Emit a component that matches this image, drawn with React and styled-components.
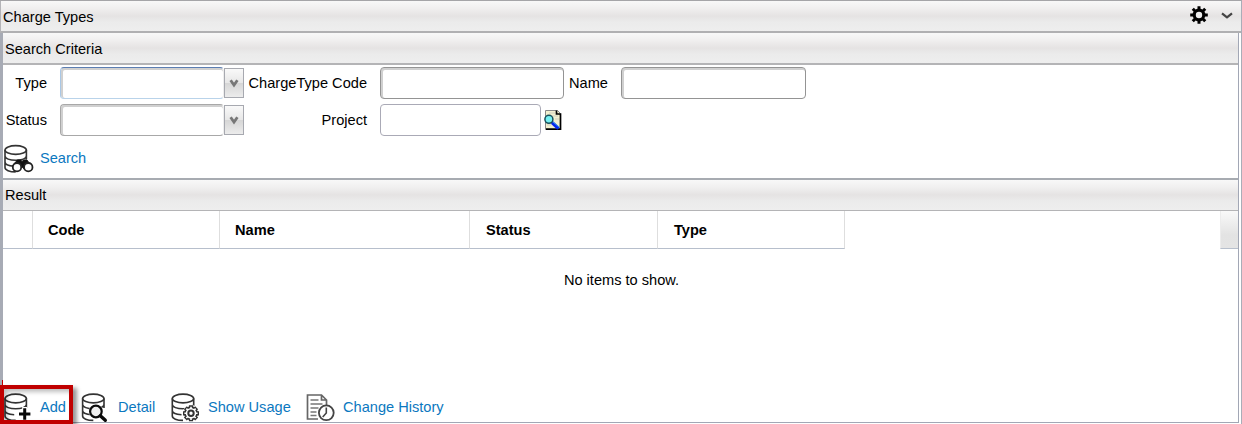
import React from "react";
import styled, { createGlobalStyle } from "styled-components";

const Global = createGlobalStyle`
  * { box-sizing: border-box; }
  body { margin: 0; background: #fff; overflow: hidden; }
`;

const Page = styled.div`
  width: 1242px;
  height: 424px;
  display: flex;
  flex-direction: column;
  font-family: "Liberation Sans", Arial, sans-serif;
  font-size: 14.6px;
  color: #000;
  border-top: 1px solid #a5a5a8;
  border-right: 1px solid #a9adb8;
`;

const Bar = styled.div`
  display: flex;
  align-items: center;
  flex: none;
  background: linear-gradient(#f8f8f8 0%, #f0efef 25%, #e5e3e3 50%, #ebebeb 70%, #eeeeee 100%);
`;

const TitleBar = styled(Bar)`
  height: 32px;
  padding: 1px 8px 0 2px;
  border-left: 1px solid #b4b4b8;
  border-bottom: 2px solid #b0b0b2;
`;

const Tools = styled.div`
  display: flex;
  align-items: center;
  gap: 13px;
  margin-left: auto;
  margin-top: -3px;
  svg { display: block; }
`;

const Body = styled.div`
  flex: none;
  width: 1239px;
  height: 390px;
  display: flex;
  flex-direction: column;
  border-left: 3px solid #a7abb5;
  border-right: 1px solid #a2a7b5;
  border-bottom: 1px solid #a2a7b5;
`;

const SectionBar = styled(Bar)`
  height: ${(p) => p.$h}px;
  padding: ${(p) => p.$top || 0}px 0 0 2px;
  border-bottom: ${(p) => p.$line}px solid #b4b4b6;
`;

const Form = styled.div`
  height: 113px;
  flex: none;
  display: flex;
  flex-direction: column;
  padding-top: 2px;
`;

const FormRow = styled.div`
  display: flex;
  align-items: center;
  height: ${(p) => p.$h}px;
`;

const Label = styled.label`
  width: ${(p) => p.$w}px;
  display: flex;
  justify-content: flex-end;
  white-space: nowrap;
  margin-right: 13px;
  line-height: 18px;
`;

const Field = styled.input`
  display: block;
  width: ${(p) => p.$w}px;
  height: 32px;
  padding: 0 6px;
  font: inherit;
  background: #fff;
  outline: none;
  border: 1px solid ${(p) => (p.$flat ? "#aaaab6" : p.$combo ? "#a8a8a8" : "#949494")};
  border-radius: 4px;
  box-shadow: ${(p) => (p.$flat ? "none" : "inset 1px 1px 0 1px #d0d0d0")};
  border-color: ${(p) => p.$focus && "#5b7db1 #b9d3ea #b9d3ea #a9c7e5"};
  ${(p) => p.$combo && "border-right-color: #eee;"}
`;

const DropButton = styled.button`
  width: 20px;
  height: 30px;
  padding: 0;
  display: flex;
  align-items: center;
  justify-content: center;
  border: 1px solid #a7a9b0;
  background: linear-gradient(#f9f9f9, #e7e7e7 50%, #d6d6d6 51%, #ececec);
`;

const Lookup = styled.span`
  display: flex;
  margin-left: 3px;
`;

const Action = styled.a`
  display: flex;
  align-items: center;
  color: #0b78c0;
  white-space: nowrap;
  width: ${(p) => p.$w}px;
  gap: ${(p) => p.$gap || 7}px;
  svg { display: block; flex: none; }
`;

const SearchLine = styled.div`
  height: 38px;
  padding: 3px 0 0 0;
`;

const ResultPanel = styled.div`
  flex: 1;
  border-top: 2px solid #a7abb1;
  display: flex;
  flex-direction: column;
`;

const Grid = styled.div`
  display: flex;
  height: 38px;
  flex: none;
`;

const HeadCell = styled.div`
  width: ${(p) => p.$w}px;
  border-right: 1px solid #dedede;
  border-bottom: 1px solid #b7bfcc;
  padding-left: ${(p) => p.$pad || 15}px;
  font-weight: bold;
  line-height: 39px;
`;

const Corner = styled.div`
  width: 18px;
  margin-left: auto;
  border-bottom: 1px solid #b7bfcc;
  border-left: 1px solid #ececec;
  background: linear-gradient(#f9f9f9, #e3e3e3 65%, #e4e4e4);
`;

const Empty = styled.div`
  flex: 1;
  text-align: center;
  padding: 22px 0 0 2px;
  line-height: 18px;
`;

const Footer = styled.div`
  height: 31px;
  display: flex;
  align-items: center;
  flex: none;
`;

const Highlight = styled.div`
  position: absolute;
  left: 0;
  top: 385px;
  width: 73px;
  height: 39px;
  border: 4px solid #c00000;
  box-shadow: 4px 3px 4px rgba(0, 0, 0, 0.4), inset 3px 3px 4px rgba(0, 0, 0, 0.25);
  pointer-events: none;

  &::before {
    content: "";
    position: absolute;
    left: -2px;
    top: -9px;
    width: 1px;
    height: 5px;
    background: #c00000;
  }
`;

const Database = () => (
  <g fill="none" stroke="#333" strokeWidth="1.6" transform="translate(.7 0)">
    <ellipse cx="12" cy="5.5" rx="10.7" ry="4.4" fill="#fff" />
    <path d="M1.3 5.5V23c0 2.5 4.5 4.4 10.7 4.4M22.7 5.5V15M1.3 11.5c0 2.6 4.8 4.3 10.7 4.3s10.7-1.7 10.7-4.3M1.3 17.6c0 2.3 3.6 3.9 9.2 4.2" />
  </g>
);

const Glyph = ({ children }) => (
  <svg width="30" height="29" viewBox="0 0 30 29" overflow="visible">{children}</svg>
);

const SearchIcon = () => (
  <Glyph>
    <g transform="translate(0 .5)">
      <Database />
      <path d="M9.3 22l5-6.5h3.4l1.3 1.6 1.5-1.6h3.4l5 6.5-4.5 2h-4l-1-1.2h-1l-1 1.2h-6z" fill="#111" stroke="#111" />
      <circle cx="14" cy="22.7" r="4.2" fill="#fff" stroke="#222" strokeWidth="1.8" />
      <circle cx="25.3" cy="22.7" r="4.2" fill="#fff" stroke="#222" strokeWidth="1.8" />
    </g>
  </Glyph>
);

const AddIcon = () => (
  <Glyph>
    <g transform="translate(0 1)">
      <Database />
      <path d="M21.7 14v14.5M15 21h13.5" stroke="#fff" strokeWidth="5" />
      <path d="M21.7 15.3v11.4M16 21h11.4" stroke="#080808" strokeWidth="3" />
    </g>
  </Glyph>
);

const DetailIcon = () => (
  <Glyph>
    <g transform="translate(.6 1)">
      <Database />
      <circle cx="15.3" cy="18.5" r="7" fill="#fff" />
      <circle cx="15.3" cy="18.5" r="5.8" fill="#eee" stroke="#0a0a0a" strokeWidth="2.2" />
      <path d="M19.7 22.7l5 4.6" stroke="#0a0a0a" strokeWidth="3.4" strokeLinecap="round" />
    </g>
  </Glyph>
);

const teeth = (n, cx, cy, r) =>
  Array.from({ length: n }, (_, i) => {
    const a = (i * 2 * Math.PI) / n;
    return `M${cx} ${cy}L${cx + r * Math.cos(a)} ${cy + r * Math.sin(a)}`;
  }).join("");

const UsageIcon = () => (
  <Glyph>
    <g transform="translate(.3 1)">
      <Database />
      <circle cx="20.7" cy="20.3" r="8.4" fill="#fff" />
      <path d={teeth(8, 20.7, 20.3, 8)} stroke="#333" strokeWidth="4.2" />
      <circle cx="20.7" cy="20.3" r="6.1" fill="#fff" stroke="#333" strokeWidth="1.7" />
      <path d={teeth(8, 20.7, 20.3, 6.6)} stroke="#fff" strokeWidth="1.6" />
      <circle cx="20.7" cy="20.3" r="2.7" fill="#fff" stroke="#333" strokeWidth="2" />
    </g>
  </Glyph>
);

const HistoryIcon = () => (
  <Glyph>
    <g transform="translate(0 .5)">
      <path d="M12 26.5H1.5v-24h14l5 5V13M15.5 2.5v5h5" fill="none" stroke="#666" strokeWidth="1.7" />
      <path d="M4.5 7.5h8M4.5 11.5h12M4.5 15.5h8M4.5 19.5h6M4.5 23h6" stroke="#777" strokeWidth="1.5" />
      <circle cx="20.3" cy="20.3" r="7.4" fill="#fff" stroke="#444" strokeWidth="1.8" />
      <path d="M20.3 15v5.5l-3.6 4" fill="none" stroke="#444" strokeWidth="1.6" />
    </g>
  </Glyph>
);

const LookupIcon = () => (
  <svg width="18" height="20" viewBox="0 0 18 20">
    <path d="M1.5.5h12l3 3v16h-15z" fill="#f3f0cf" stroke="#888" />
    <path d="M12.5.5v3.5h4V19.2H2" fill="none" stroke="#000" strokeWidth="1.7" />
    <path d="M5 3h6M8 6h6M11 9h4M3 15h4" stroke="#d0cfc0" />
    <path d="M8 12.5l6.5 6" stroke="#0626ee" strokeWidth="3.4" />
    <path d="M8.5 11.5l7 6" stroke="#39a5ef" strokeWidth="1" />
    <circle cx="4.9" cy="9.3" r="4" fill="#76f0f2" stroke="#164f59" strokeWidth="1.5" />
  </svg>
);

const GearIcon = () => (
  <svg width="18" height="18" viewBox="0 0 18 18">
    <path d={teeth(8, 9, 9, 8.8)} stroke="#000" strokeWidth="3" />
    <circle cx="9" cy="9" r="4.8" fill="#ededed" stroke="#000" strokeWidth="3.2" />
  </svg>
);

const Chevron = ({ bold }) =>
  bold ? (
    <svg width="10" height="9" viewBox="0 0 10 9">
      <path d="M1.6 1.2L5 6l3.4-4.8" fill="none" stroke="#777" strokeWidth="2.8" />
    </svg>
  ) : (
    <svg width="12" height="7" viewBox="0 0 12 7">
      <path d="M1 1.3L6 5.3l5-4" fill="none" stroke="#444" strokeWidth="2.2" strokeLinejoin="round" />
    </svg>
  );

const Combo = ({ focus }) => (
  <>
    <Field $w={164} $combo $focus={focus} />
    <DropButton><Chevron bold /></DropButton>
  </>
);

export default function App() {
  return (
    <>
      <Global />
      <Page>
        <TitleBar>
          Charge Types
          <Tools><GearIcon /><Chevron /></Tools>
        </TitleBar>
        <Body>
          <SectionBar $h={32} $line={2} $top={1}>Search Criteria</SectionBar>
          <Form>
            <FormRow $h={33}>
              <Label $w={44}>Type</Label>
              <Combo focus />
              <Label $w={123}>ChargeType Code</Label>
              <Field $w={184} />
              <Label $w={44}>Name</Label>
              <Field $w={185} />
            </FormRow>
            <FormRow $h={42}>
              <Label $w={44}>Status</Label>
              <Combo />
              <Label $w={123}>Project</Label>
              <Field $w={161} $flat />
              <Lookup><LookupIcon /></Lookup>
            </FormRow>
            <SearchLine>
              <Action $w={100}><SearchIcon />Search</Action>
            </SearchLine>
          </Form>
          <ResultPanel>
            <SectionBar $h={31} $line={1}>Result</SectionBar>
            <Grid>
              <HeadCell $w={30} />
              <HeadCell $w={187}>Code</HeadCell>
              <HeadCell $w={250}>Name</HeadCell>
              <HeadCell $w={188} $pad={16}>Status</HeadCell>
              <HeadCell $w={187} $pad={16}>Type</HeadCell>
              <Corner />
            </Grid>
            <Empty>No items to show.</Empty>
            <Footer>
              <Action $w={77}><AddIcon />Add</Action>
              <Action $w={90} $gap={8}><DetailIcon />Detail</Action>
              <Action $w={136} $gap={8}><UsageIcon />Show Usage</Action>
              <Action $w={140} $gap={7}><HistoryIcon />Change History</Action>
            </Footer>
          </ResultPanel>
        </Body>
      </Page>
      <Highlight />
    </>
  );
}
